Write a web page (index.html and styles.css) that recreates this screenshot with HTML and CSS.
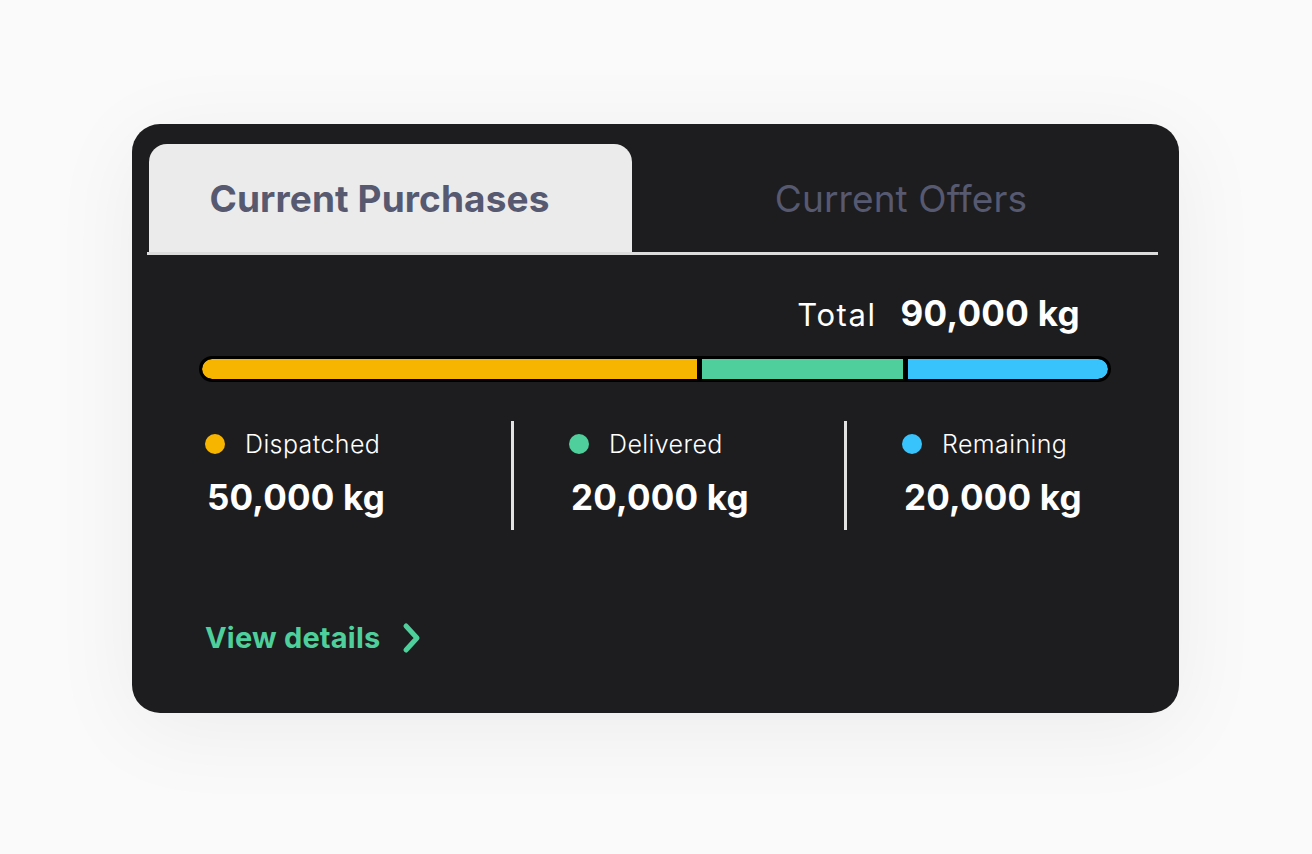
FILE: index.html
```html
<!DOCTYPE html>
<html>
<head>
<meta charset="utf-8">
<link rel="stylesheet" href="styles.css">
</head>
<body>
<div class="page">
  <div class="card">
    <div class="tabs">
      <div class="tab active">Current Purchases</div>
      <div class="tab">Current Offers</div>
    </div>
    <div class="content">
      <div class="total">
        <span class="total-label">Total</span>
        <span class="total-value">90,000 kg</span>
      </div>
      <div class="bar">
        <div class="seg seg-yellow" style="width:54.6%"></div>
        <div class="seg seg-green" style="width:22.2%"></div>
        <div class="seg seg-blue"></div>
      </div>
      <div class="stats">
        <div class="stat stat-first">
          <div class="stat-label"><span class="dot dot-yellow"></span>Dispatched</div>
          <div class="stat-value">50,000 kg</div>
        </div>
        <div class="stat stat-mid">
          <div class="stat-label"><span class="dot dot-green"></span>Delivered</div>
          <div class="stat-value">20,000 kg</div>
        </div>
        <div class="stat stat-last">
          <div class="stat-label"><span class="dot dot-blue"></span>Remaining</div>
          <div class="stat-value">20,000 kg</div>
        </div>
      </div>
      <a class="details" href="#">View details
        <svg class="chev" width="22" height="32" viewBox="0 0 22 32"><path d="M5 4 L16 16 L5 28" fill="none" stroke="#4ecf9b" stroke-width="5" stroke-linecap="round" stroke-linejoin="round"/></svg>
      </a>
    </div>
  </div>
</div>
</body>
</html>
```
FILE: styles.css
```css
* { box-sizing: border-box; }
html, body { margin: 0; padding: 0; }
body {
  background: #fafafa;
  font-family: Inter, "Open Sans", sans-serif;
  width: 1312px;
  height: 854px;
  overflow: hidden;
}
.page {
  padding: 124px 0 0 132px;
}
.card {
  width: 1047px;
  height: 589px;
  background: #1d1d1f;
  border-radius: 28px;
  box-shadow: 0 16px 90px rgba(0,0,0,0.06);
  padding: 20px 21px 0 15px;
}
.tabs {
  display: flex;
  height: 111px;
  border-bottom: 3px solid #dcdcdc;
}
.tab {
  flex: 1;
  display: flex;
  align-items: center;
  justify-content: center;
  font-size: 37px;
  color: #565970;
  padding-top: 0;
  padding-left: 12px;
  letter-spacing: 0.1px;
}
.tab.active {
  flex: 0 0 483px;
  margin-left: 2px;
  background: #ebebeb;
  border-radius: 18px 18px 0 0;
  font-weight: 700;
  padding-left: 0;
  padding-right: 22px;
}
.content {
  padding: 0 47px 0 52px;
}
.total {
  display: flex;
  justify-content: flex-end;
  align-items: baseline;
  gap: 24px;
  padding-right: 31px;
  margin-top: 37px;
  height: 42px;
  color: #fff;
}
.total-label {
  font-size: 31px;
  font-weight: 400;
  letter-spacing: 1.6px;
}
.total-value {
  font-size: 35px;
  font-weight: 700;
  letter-spacing: 0.3px;
}
.bar {
  margin-top: 22px;
  height: 26px;
  border: 3px solid #000;
  border-radius: 13px;
  background: #000;
  display: flex;
  gap: 5px;
  overflow: hidden;
}
.seg { height: 100%; }
.seg-yellow { background: #f7b500; border-radius: 10px 0 0 10px; }
.seg-green { background: #4ecf9b; }
.seg-blue { background: #38c3fc; flex: 1; border-radius: 0 10px 10px 0; }
.stats {
  display: flex;
  margin-top: 39px;
  height: 109px;
}
.stat {
  padding-top: 9px;
}
.stat-first { width: 315px; padding-left: 6px; border-right: 3px solid #e2e2e2; }
.stat-mid { width: 333px; padding-left: 55px; border-right: 3px solid #e2e2e2; }
.stat-last { flex: 1; padding-left: 55px; }
.stat-label {
  display: flex;
  align-items: center;
  font-size: 25px;
  font-weight: 300;
  letter-spacing: 0.4px;
  color: #fff;
  height: 28px;
}
.dot {
  width: 20px;
  height: 20px;
  border-radius: 50%;
  margin-right: 20px;
}
.dot-yellow { background: #f7b500; }
.dot-green { background: #4ecf9b; }
.dot-blue { background: #38c3fc; }
.stat-value {
  margin-top: 18px;
  font-size: 35px;
  font-weight: 700;
  color: #fff;
  padding-left: 2px;
  letter-spacing: 0.2px;
}
.details {
  display: inline-flex;
  align-items: center;
  margin-top: 90px;
  margin-left: 6px;
  font-size: 29px;
  font-weight: 700;
  letter-spacing: 0.2px;
  color: #4ecf9b;
  text-decoration: none;
  gap: 21px;
}
.chev { display: block; }
```
